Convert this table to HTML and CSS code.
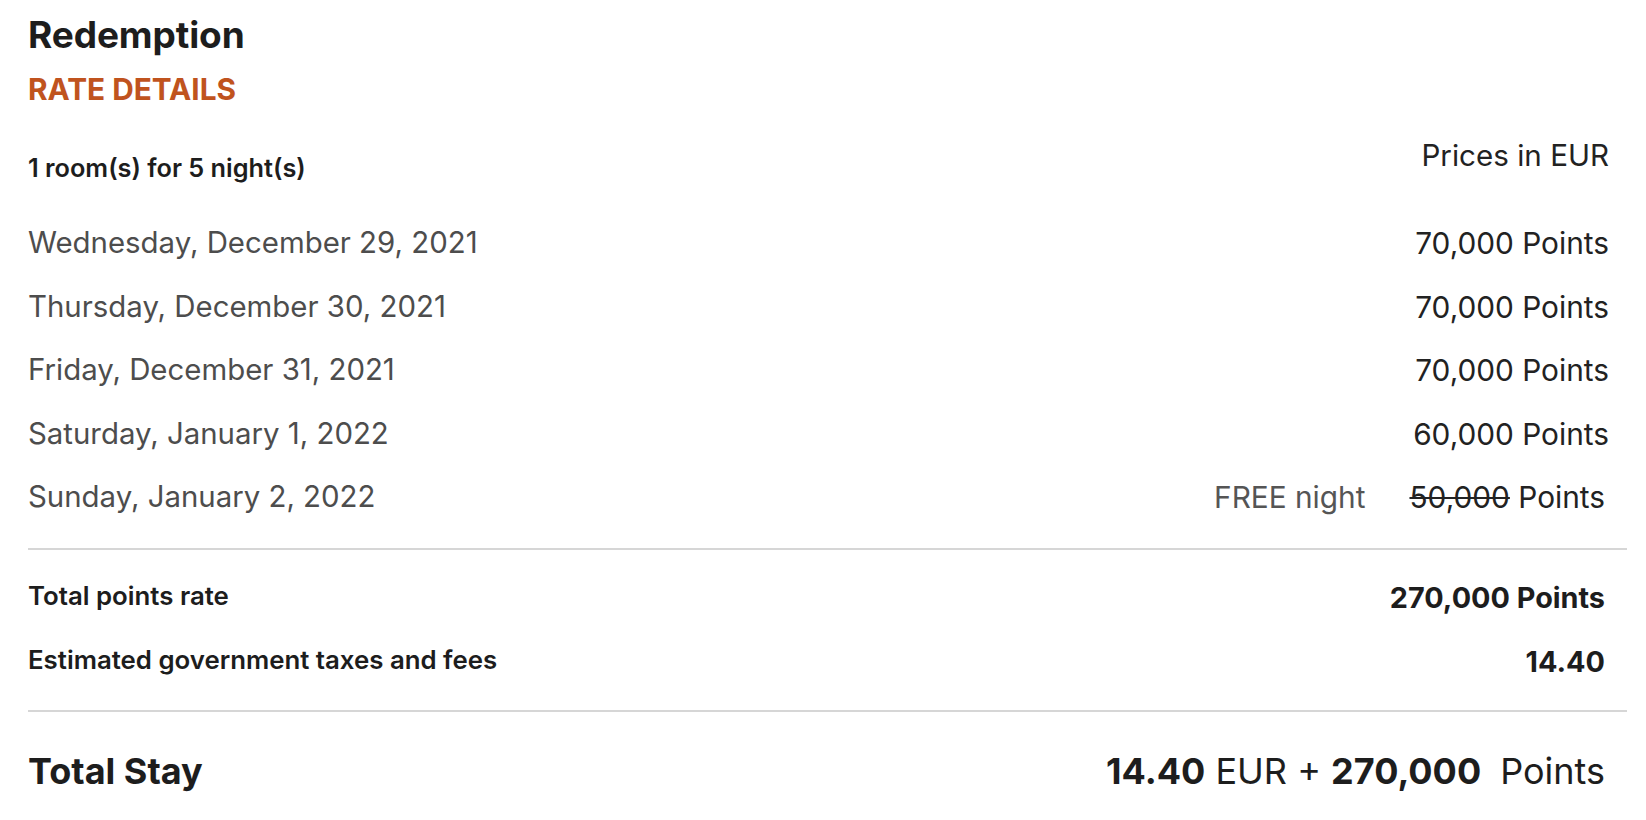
FILE: index.html
```html
<!DOCTYPE html>
<html lang="en">
<head>
<meta charset="utf-8">
<title>Redemption - Rate details</title>
<link rel="stylesheet" href="styles.css">
</head>
<body>
<div class="card">
  <h1 class="title">Redemption</h1>
  <h2 class="subtitle">RATE DETAILS</h2>

  <div class="head-row">
    <span class="rooms">1 room(s) for 5 night(s)</span>
    <span class="currency">Prices in EUR</span>
  </div>

  <ul class="nights">
    <li class="night">
      <span class="date">Wednesday, December 29, 2021</span>
      <span class="pts">70,000 Points</span>
    </li>
    <li class="night">
      <span class="date">Thursday, December 30, 2021</span>
      <span class="pts">70,000 Points</span>
    </li>
    <li class="night">
      <span class="date">Friday, December 31, 2021</span>
      <span class="pts">70,000 Points</span>
    </li>
    <li class="night">
      <span class="date">Saturday, January 1, 2022</span>
      <span class="pts">60,000 Points</span>
    </li>
    <li class="night night-free">
      <span class="date">Sunday, January 2, 2022</span>
      <span class="free-wrap">
        <span class="free-label">FREE night</span>
        <span class="pts"><s class="struck">50,000</s> Points</span>
      </span>
    </li>
  </ul>

  <hr class="divider">

  <div class="summary">
    <div class="sum-row">
      <span class="sum-label">Total points rate</span>
      <span class="sum-value">270,000 Points</span>
    </div>
    <div class="sum-row">
      <span class="sum-label">Estimated government taxes and fees</span>
      <span class="sum-value">14.40</span>
    </div>
  </div>

  <hr class="divider divider-bottom">

  <div class="total-row">
    <span class="total-label">Total Stay</span>
    <span class="total-value"><b class="strong">14.40</b> EUR + <b class="strong">270,000</b><span class="total-unit">Points</span></span>
  </div>
</div>
</body>
</html>
```
FILE: styles.css
```css
* { box-sizing: border-box; }

html, body {
  margin: 0;
  padding: 0;
  background: #ffffff;
}

body {
  font-family: "Inter", "Liberation Sans", sans-serif;
  color: #222222;
}

.card {
  width: 1627px;
  padding: 13.2px 0 0 28px;
}

.title {
  margin: 0;
  font-size: 37px;
  line-height: 44px;
  font-weight: 700;
  color: #1d1d1d;
  letter-spacing: -0.1px;
}

.subtitle {
  margin: 13.9px 0 0;
  font-size: 29.8px;
  line-height: 36px;
  font-weight: 700;
  color: #c0531e;
}

.head-row {
  display: flex;
  justify-content: space-between;
  align-items: flex-start;
  margin-top: 29.9px;
  padding-right: 18px;
}

.rooms {
  margin-top: 15.6px;
  font-size: 25.3px;
  line-height: 30px;
  font-weight: 600;
  color: #1d1d1d;
}

.currency {
  font-size: 29.6px;
  line-height: 36px;
  color: #222222;
}

.nights {
  list-style: none;
  margin: 29px 0 0;
  padding: 0;
}

.night {
  display: flex;
  justify-content: space-between;
  align-items: center;
  padding: 13.75px 18px 13.75px 0;
  font-size: 29.4px;
  line-height: 36px;
}

.date {
  color: #4d4d4d;
}

.pts {
  font-size: 29.8px;
  color: #222222;
}

.night-free {
  padding-right: 22px;
}

.free-wrap {
  display: flex;
  gap: 44px;
}

.free-label {
  font-size: 29.8px;
  color: #555555;
}

.struck {
  text-decoration: line-through;
  text-decoration-thickness: 2px;
}

.divider {
  margin: 18.85px 0 0;
  border: 0;
  height: 2px;
  background: #d6d6d6;
}

.summary {
  padding-top: 16.2px;
}

.sum-row {
  display: flex;
  justify-content: space-between;
  align-items: flex-start;
  padding: 15px 22px 15px 0;
}

.sum-label {
  font-size: 25.8px;
  line-height: 29px;
  font-weight: 600;
  color: #1d1d1d;
}

.sum-value {
  font-size: 28.8px;
  line-height: 34px;
  font-weight: 700;
  color: #1d1d1d;
}

.divider-bottom {
  margin-top: 15.8px;
}

.total-row {
  display: flex;
  justify-content: space-between;
  align-items: flex-start;
  margin-top: 36.9px;
  padding-right: 22px;
  font-size: 36px;
  line-height: 44px;
  color: #1d1d1d;
}

.total-label {
  font-weight: 700;
}

.total-value {
  font-weight: 400;
}

.strong {
  font-weight: 700;
}

.total-unit {
  margin-left: 19px;
}
```
